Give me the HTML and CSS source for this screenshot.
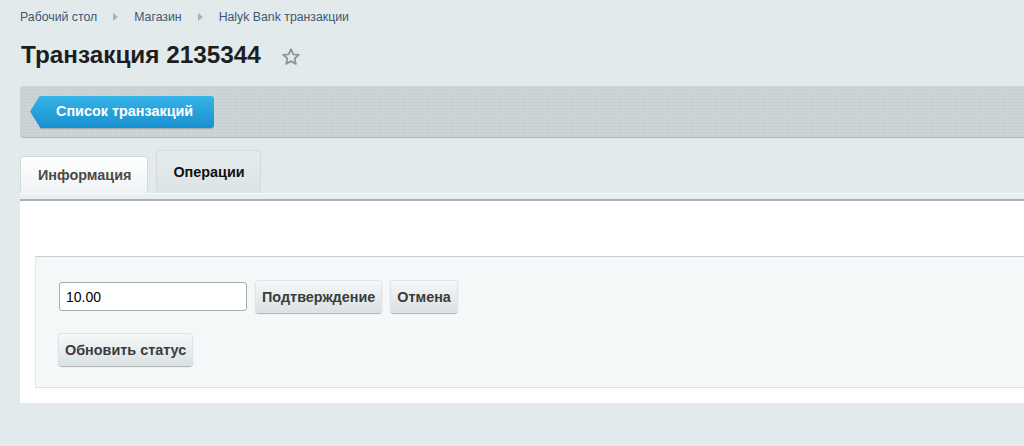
FILE: index.html
```html
<!DOCTYPE html>
<html lang="ru">
<head>
  <meta charset="UTF-8" />
  <meta name="viewport" content="width=device-width, initial-scale=1.0"/>
  <title>Транзакция 2135344</title>
  <link rel="stylesheet" href="styles.css">
</head>
<body>

  <div class="page">
    <div class="crumbs">
      <a href="#">Рабочий стол</a>
      <span class="sep"></span>
      <a href="#">Магазин</a>
      <span class="sep"></span>
      <a href="#">Halyk Bank транзакции</a>
    </div>

    <div class="title-row">
      <h1>Транзакция 2135344</h1>
      <svg class="star" width="20" height="20" viewBox="0 0 20 20">
        <path d="M10 2.2l2.3 5.1 5.5.5-4.2 3.7 1.3 5.4L10 14.1l-4.9 2.8 1.3-5.4-4.2-3.7 5.5-.5z" fill="none" stroke="#8d969a" stroke-width="1.8" stroke-linejoin="round"/>
      </svg>
    </div>

    <div class="toolbar">
      <a class="btn-back" href="#">Список транзакций</a>
    </div>

    <div class="tabs">
      <div class="tab">Информация</div>
      <div class="tab active">Операции</div>
    </div>
    <div class="tabs-line"></div>

    <div class="panel">
      <div class="box">
        <div class="row">
          <input class="field" type="text" value="10.00">
          <button class="btn">Подтверждение</button>
          <button class="btn">Отмена</button>
        </div>
        <div class="row">
          <button class="btn">Обновить статус</button>
        </div>
      </div>
    </div>
  </div>

</body>
</html>
```

FILE: styles.css
```css
body {
  margin: 0;
  font-family: "Liberation Sans", Arial, sans-serif;
  background: #e2eaec;
  overflow: hidden;
}

.page {
  padding-left: 20px;
}

.crumbs {
  display: flex;
  align-items: center;
  height: 14px;
  padding-top: 10px;
  font-size: 12.3px;
}

.crumbs a {
  color: #3f5674;
  text-decoration: none;
}

.sep {
  width: 0;
  height: 0;
  margin: 0 16px 0 16px;
  border-top: 4px solid transparent;
  border-bottom: 4px solid transparent;
  border-left: 5px solid #a9b1b5;
}

.title-row {
  display: flex;
  align-items: center;
  height: 40px;
  margin-top: 11px;
}

h1 {
  margin: 0 0 0 1px;
  font-size: 24.3px;
  font-weight: bold;
  color: #1e1e1e;
}

.star {
  margin-left: 20px;
  margin-top: 3px;
}

.toolbar {
  display: flex;
  align-items: center;
  height: 51px;
  margin-top: 11px;
  padding-left: 10px;
  border-radius: 4px 0 0 4px;
  border-bottom: 1px solid #aab5b9;
  background-color: #cbd4d7;
  background-image: radial-gradient(circle, #bcc6ca 0.8px, transparent 1px);
  background-size: 3px 3px;
}

.btn-back {
  position: relative;
  display: block;
  height: 32px;
  line-height: 31px;
  margin-left: 10px;
  padding: 0 21px 0 16px;
  border-radius: 0 3px 3px 0;
  background: linear-gradient(#36b3e8, #1890cf);
  box-shadow: 0 1px 1px rgba(0, 0, 0, 0.2);
  color: #fff;
  font-size: 14.4px;
  font-weight: bold;
  text-decoration: none;
}

.btn-back::before {
  content: "";
  position: absolute;
  left: -10px;
  top: 0;
  width: 10px;
  height: 32px;
  background: linear-gradient(#36b3e8, #1890cf);
  clip-path: polygon(100% 0, 100% 100%, 0 50%);
}

.tabs {
  display: flex;
  align-items: flex-end;
  gap: 8px;
  height: 43px;
  margin-top: 12px;
}

.tab {
  height: 36px;
  line-height: 37px;
  padding: 0 16px 0 17px;
  border: 1px solid #d3dadd;
  border-bottom: none;
  border-radius: 4px 4px 0 0;
  background: linear-gradient(#ffffff, #f0f3f4);
  color: #494949;
  font-size: 14.4px;
  font-weight: bold;
}

.tab.active {
  height: 42px;
  line-height: 43px;
  padding: 0 15px 0 16px;
  background: linear-gradient(#e6ecee, #dce3e5);
  color: #111;
}

.tabs-line {
  height: 5px;
  border-top: 1px solid #f7f9fa;
  background: #e9eef0;
}

.panel {
  padding: 55px 0 15px 15px;
  border-top: 2px solid #a9b1b4;
  background: #fff;
  box-shadow: 0 1px 1px rgba(0, 0, 0, 0.08);
}

.box {
  padding: 23px 0 21px 22px;
  border-top: 1px solid #c6ced1;
  border-bottom: 1px solid #dbe2e5;
  border-left: 1px solid #e2e8ea;
  background: #f5f8f9;
}

.row {
  display: flex;
  align-items: center;
  gap: 8px;
}

.row + .row {
  margin-top: 20px;
}

.field {
  box-sizing: border-box;
  width: 188px;
  height: 29px;
  margin: 0 0 0 1px;
  padding: 0 6px;
  border: 1px solid #a4abae;
  border-radius: 3px;
  background: #fff;
  font-family: "Liberation Sans", Arial, sans-serif;
  font-size: 14px;
  color: #000;
}

.btn {
  height: 33px;
  padding: 0 7px;
  border: none;
  border-radius: 4px;
  background: linear-gradient(#f7f9fa, #d9e1e3);
  box-shadow: 0 1px 1px rgba(0, 0, 0, 0.3), inset 0 0 0 1px #dfe5e7;
  font-family: "Liberation Sans", Arial, sans-serif;
  font-size: 14.4px;
  font-weight: bold;
  color: #3b3b3b;
  cursor: pointer;
}
```
